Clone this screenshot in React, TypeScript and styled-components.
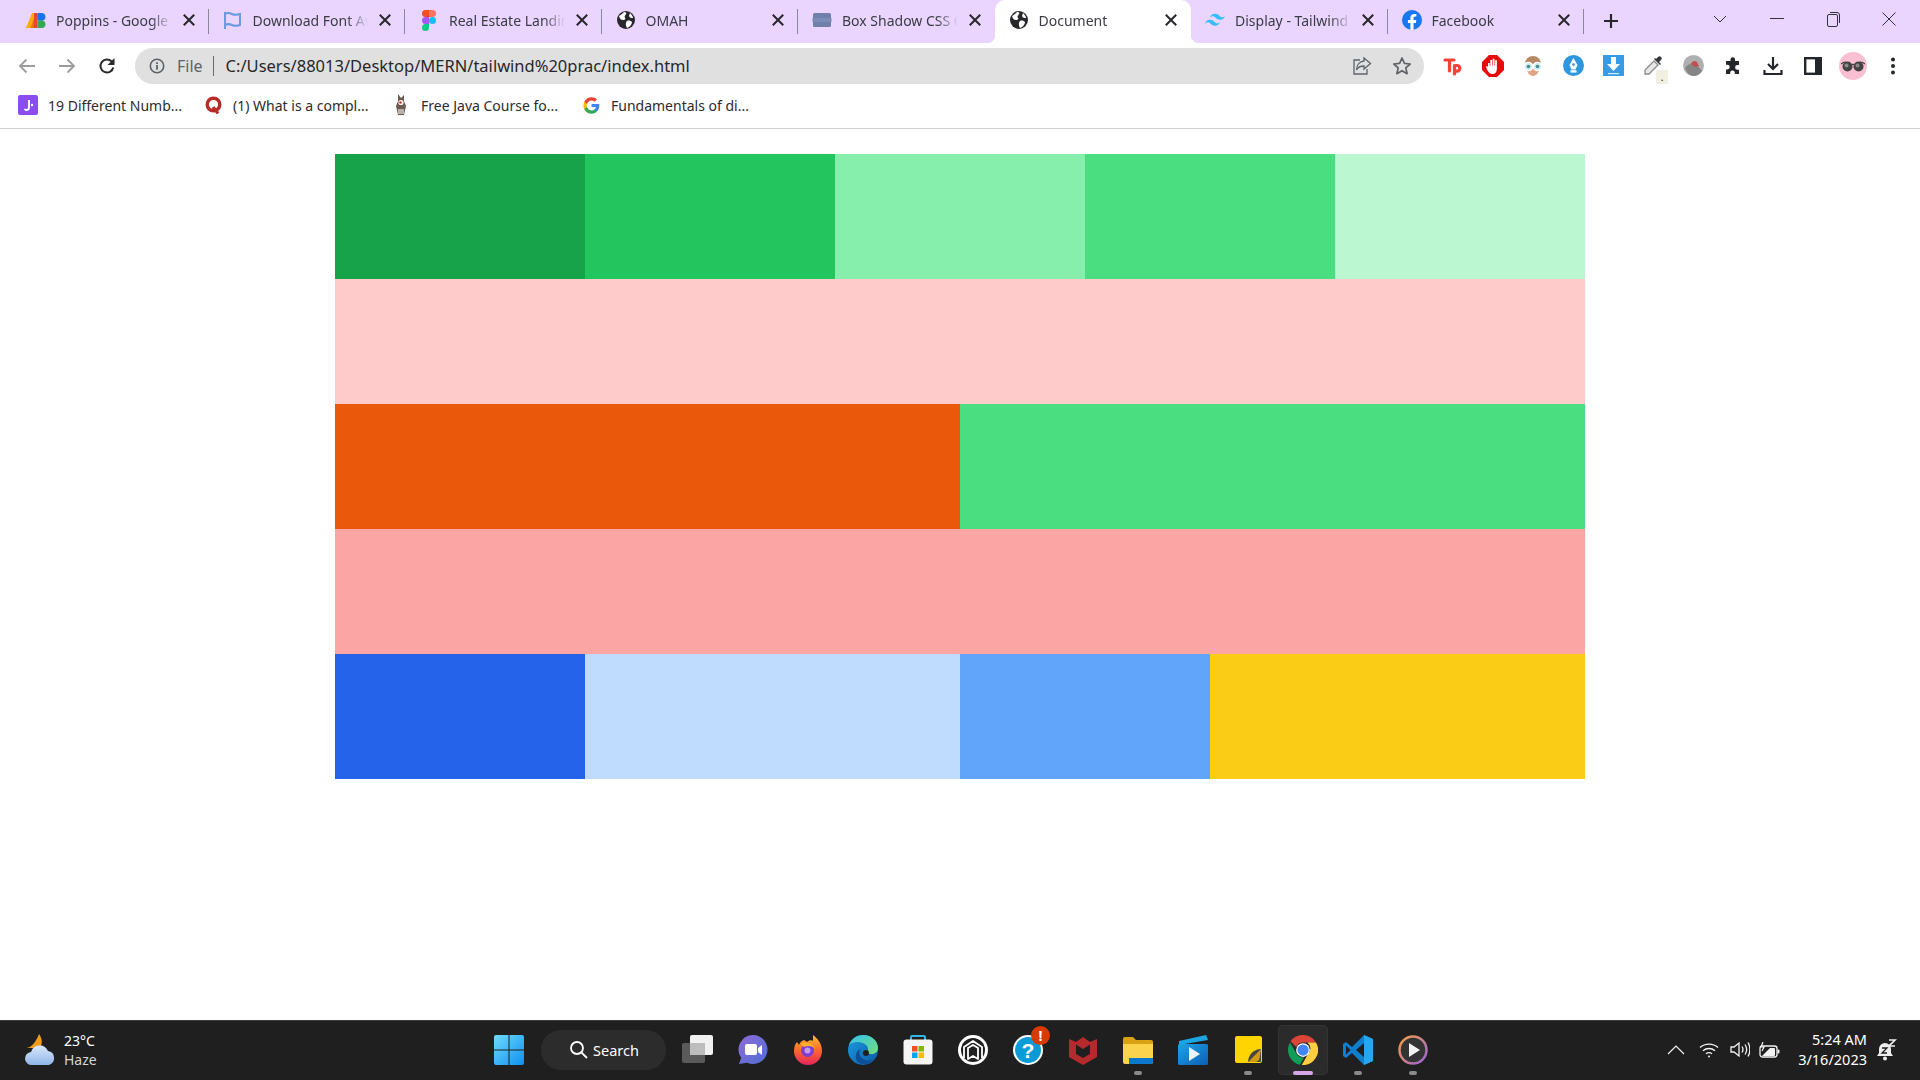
import React from "react";
import styled, { createGlobalStyle, css } from "styled-components";

const Global = createGlobalStyle`
  html, body { margin: 0; padding: 0; background: #fff; }
  * { box-sizing: border-box; }
  body { font-family: "Noto Sans", "Open Sans", sans-serif; }
`;

const Page = styled.div`
  width: 1920px;
  height: 1080px;
  display: flex;
  flex-direction: column;
  overflow: hidden;
`;

/* ---------- tab strip ---------- */
const TabStrip = styled.div`
  height: 43px;
  flex: none;
  background: #e9d5ff;
  display: flex;
  padding-left: 12px;
`;

const Tab = styled.div<{ $active?: boolean; $sep?: boolean }>`
  position: relative;
  width: 196.5px;
  height: 43px;
  flex: none;
  display: flex;
  align-items: center;
  gap: 10px;
  padding: 0 13px 3px 14px;
  color: #3c3c44;
  ${(p) =>
    p.$sep &&
    css`
      &::after {
        content: "";
        position: absolute;
        right: 0;
        top: 9px;
        width: 1px;
        height: 25px;
        background: #8d8896;
      }
    `}
  ${(p) =>
    p.$active &&
    css`
      background: #fff;
      border-radius: 10px 10px 0 0;
      &::before,
      &::after {
        content: "";
        position: absolute;
        bottom: 0;
        width: 8px;
        height: 8px;
      }
      &::before {
        left: -8px;
        background: radial-gradient(circle at 0 0, #e9d5ff 8px, #fff 8.5px);
      }
      &::after {
        right: -8px;
        top: auto;
        background: radial-gradient(circle at 100% 0, #e9d5ff 8px, #fff 8.5px);
      }
    `}
`;

const FavSlot = styled.span`
  width: 20px;
  height: 20px;
  flex: none;
  display: flex;
  align-items: center;
  justify-content: center;
`;

const TabTitle = styled.span`
  flex: 1;
  min-width: 0;
  font-size: 14px;
  white-space: nowrap;
  overflow: hidden;
  -webkit-mask-image: linear-gradient(to right, #000 82%, transparent 100%);
  mask-image: linear-gradient(to right, #000 82%, transparent 100%);
`;

const CloseBox = styled.span`
  width: 14px;
  height: 14px;
  flex: none;
  display: flex;
`;

const NewTab = styled.div`
  width: 54px;
  height: 43px;
  flex: none;
  display: flex;
  align-items: center;
  justify-content: center;
  padding-bottom: 1px;
`;

const StripRight = styled.div`
  margin-left: auto;
  display: flex;
  align-items: flex-start;
`;

const WinBtn = styled.div<{ $w: number }>`
  width: ${(p) => p.$w}px;
  height: 38px;
  display: flex;
  align-items: center;
  justify-content: center;
`;

/* ---------- toolbar ---------- */
const Toolbar = styled.div`
  height: 45px;
  flex: none;
  background: #fff;
  display: flex;
  align-items: center;
  padding-left: 7px;
`;

const NavBtn = styled.div`
  width: 40px;
  height: 36px;
  flex: none;
  display: flex;
  align-items: center;
  justify-content: center;
`;

const Omnibox = styled.div`
  width: 1289px;
  height: 36px;
  margin-left: 8px;
  margin-right: 9px;
  flex: none;
  border-radius: 18px;
  background: #e0e0e0;
  display: flex;
  align-items: center;
  padding: 0 2px 0 14px;
  color: #222;
`;

const FileLabel = styled.span`
  margin-left: 12px;
  font-size: 16px;
  color: #5f6368;
`;

const Divider = styled.span`
  width: 1px;
  height: 20px;
  margin: 0 12px 0 10px;
  background: #6a6a6a;
`;

const Url = styled.span`
  flex: 1;
  font-size: 16.5px;
  color: #27272a;
  white-space: nowrap;
`;

const OmniAction = styled.span`
  width: 40px;
  display: flex;
  justify-content: center;
`;

const ExtSlot = styled.div`
  position: relative;
  width: 40px;
  height: 36px;
  flex: none;
  display: flex;
  align-items: center;
  justify-content: center;
`;

const ExtTag = styled.span`
  position: absolute;
  right: 5px;
  bottom: 0;
  width: 12px;
  height: 14px;
  background: #f1efe2;
  border-radius: 1px;
  display: flex;
  align-items: center;
  justify-content: center;
  color: #222;
  font-size: 10px;
  line-height: 1;
`;

const Avatar = styled.div`
  width: 28px;
  height: 28px;
  border-radius: 50%;
  background: #fbbfd3;
  display: flex;
  align-items: center;
  justify-content: center;
`;

/* ---------- bookmarks ---------- */
const BookmarkBar = styled.div`
  height: 41px;
  flex: none;
  background: #fff;
  border-bottom: 1px solid #d2d2d2;
  display: flex;
  align-items: center;
  padding: 0 0 6px 18px;
`;

const Bookmark = styled.div<{ $w: number; $gap: number }>`
  width: ${(p) => p.$w}px;
  flex: none;
  display: flex;
  align-items: center;
  gap: ${(p) => p.$gap}px;
  font-size: 14px;
  color: #2c2c2c;
  white-space: nowrap;
`;

/* ---------- content ---------- */
const Content = styled.main`
  flex: 1;
  background: #fff;
  padding-top: 25px;
`;

const ColorGrid = styled.div`
  width: 1250px;
  margin: 0 auto;
  display: grid;
  grid-template-columns: repeat(10, 1fr);
  grid-auto-rows: 125px;
`;

const Cell = styled.div<{ $c: string; $span: number }>`
  background: ${(p) => p.$c};
  grid-column: span ${(p) => p.$span};
`;

/* ---------- taskbar ---------- */
const Taskbar = styled.footer`
  height: 60px;
  flex: none;
  background: #1f1f1f;
  border-top: 1px solid #3b3b3b;
  padding-bottom: 2px;
  display: grid;
  grid-template-columns: 484px auto 1fr;
  align-items: center;
  color: #fff;
`;

const Weather = styled.div`
  display: flex;
  align-items: center;
  gap: 8px;
  padding-left: 24px;
`;

const WeatherText = styled.div`
  display: flex;
  flex-direction: column;
  font-size: 14px;
  line-height: 19px;
`;

const WeatherSub = styled.span`
  color: #d4d4d4;
`;

const Dock = styled.div`
  display: flex;
  align-items: center;
  gap: 5px;
`;

const DockItem = styled.div<{ $active?: boolean }>`
  position: relative;
  width: 50px;
  height: 50px;
  flex: none;
  display: flex;
  align-items: center;
  justify-content: center;
  border-radius: 5px;
  ${(p) =>
    p.$active &&
    css`
      background: #2b2b2b;
      box-shadow: inset 0 0 0 1px #343434;
    `}
`;

const Pip = styled.span<{ $active?: boolean }>`
  position: absolute;
  bottom: 0;
  left: 50%;
  transform: translateX(-50%);
  width: ${(p) => (p.$active ? 20 : 8)}px;
  height: 4px;
  border-radius: 2px;
  background: ${(p) => (p.$active ? "#d7a6e8" : "#8a8a8a")};
`;

const Alert = styled.span`
  position: absolute;
  top: 1px;
  right: 3px;
  width: 19px;
  height: 19px;
  border-radius: 50%;
  background: #d83b01;
  color: #fff;
  font-size: 14px;
  font-weight: 700;
  line-height: 19px;
  text-align: center;
`;

const SearchPill = styled.div`
  width: 125px;
  height: 40px;
  margin: 0 2px;
  flex: none;
  border-radius: 20px;
  background: #2c2c2c;
  display: flex;
  align-items: center;
  padding-left: 28px;
  gap: 5px;
  font-size: 14.5px;
`;

const Tray = styled.div`
  justify-self: end;
  display: flex;
  align-items: center;
  height: 100%;
`;

const TrayIcon = styled.div<{ $w: number }>`
  width: ${(p) => p.$w}px;
  display: flex;
  justify-content: center;
`;

const Clock = styled.div`
  margin-left: 14px;
  margin-bottom: 2px;
  text-align: right;
  font-size: 14.5px;
  line-height: 20px;
`;

const BellSlot = styled.div`
  width: 53px;
  padding-left: 8px;
  padding-right: 23px;
  display: flex;
  justify-content: center;
`;

/* ---------- drawings ---------- */
const X = ({ c = "#27272a" }: { c?: string }) => (
  <svg width="14" height="14" viewBox="0 0 14 14">
    <path d="M2.5 2.5l9 9M11.5 2.5l-9 9" stroke={c} strokeWidth="2" strokeLinecap="square" />
  </svg>
);

const Globe = () => (
  <svg width="20" height="20" viewBox="0 0 20 20">
    <circle cx="10" cy="10" r="9" fill="#28282c" />
    <path d="M3 6c2-1 4-3 5-4 2 0 3 1 2 2-1 2-2 2-1 4 1 1 0 2-2 2S4 9 3 6zM11 11c2-1 4 0 5 1 0 2-2 5-5 6-1-2-2-5 0-7zM14 3c1 1 3 3 3 5-2 0-3 0-4-2z" fill="#fff" />
  </svg>
);

const GoogleFontsFav = () => (
  <svg width="20" height="16" viewBox="0 0 20 16">
    <path d="M0 16L6 1h2v15z" fill="#f9ab00" />
    <path d="M4.500 16L9 3.500V16z" fill="#e8710a" />
    <rect x="8" y="1" width="3.500" height="15" fill="#ea4335" />
    <circle cx="15.500" cy="4.800" r="3.900" fill="#1a73e8" />
    <path d="M11.500 1h4v7.600h-4z" fill="#1a73e8" />
    <path d="M11.500 8.500h4.200a3.750 3.750 0 010 7.500h-4.200z" fill="#34a853" />
  </svg>
);

const FlagFav = () => (
  <svg width="19" height="19" viewBox="0 0 19 19" fill="none">
    <path d="M2 1v17" stroke="#6b9be0" strokeWidth="2" />
    <path d="M2 3c2-1.500 4-1.500 7 0s4 1 8 0v11c-3 1-5 1.500-8 0s-5-1-7 0z" stroke="#6b9be0" strokeWidth="2" />
  </svg>
);

const FigmaFav = () => (
  <svg width="14" height="21" viewBox="0 0 14 21">
    <path d="M0 3.500A3.500 3.500 0 013.500 0H7v7H3.500A3.500 3.500 0 010 3.500z" fill="#f24e1e" />
    <path d="M7 0h3.500a3.500 3.500 0 010 7H7z" fill="#ff7262" />
    <path d="M0 10.500A3.500 3.500 0 013.500 7H7v7H3.500A3.500 3.500 0 010 10.500z" fill="#a259ff" />
    <circle cx="10.500" cy="10.500" r="3.500" fill="#1abcfe" />
    <path d="M0 17.500A3.500 3.500 0 013.500 14H7v3.500a3.500 3.500 0 01-7 0z" fill="#0acf83" />
  </svg>
);

const BoxFav = () => (
  <svg width="20" height="16" viewBox="0 0 20 16">
    <rect x="1" y="1" width="18" height="14" rx="1.500" fill="#6f80ab" />
    <rect x="0" y="6" width="20" height="4" fill="#8594bb" opacity=".6" />
  </svg>
);

const TailwindFav = () => (
  <svg width="21" height="14" viewBox="0 0 24 15">
    <path d="M12 0C8.800 0 6.800 1.600 6 4.800c1.200-1.600 2.600-2.200 4.200-1.800.9.200 1.600.9 2.300 1.600C13.700 5.800 15 7.200 18 7.200c3.200 0 5.200-1.600 6-4.800-1.200 1.600-2.600 2.200-4.200 1.800-.9-.2-1.600-.9-2.300-1.600C16.300 1.400 15 0 12 0zM6 7.200c-3.200 0-5.200 1.600-6 4.800 1.200-1.600 2.600-2.200 4.200-1.800.9.200 1.600.9 2.300 1.600 1.200 1.200 2.500 2.600 5.500 2.600 3.200 0 5.200-1.600 6-4.800-1.200 1.600-2.600 2.200-4.200 1.800-.9-.2-1.600-.9-2.300-1.600C10.300 8.600 9 7.200 6 7.200z" fill="#38bdf8" />
  </svg>
);

const FacebookFav = () => (
  <svg width="20" height="20" viewBox="0 0 20 20">
    <circle cx="10" cy="10" r="10" fill="#1877f2" />
    <path d="M13.900 12.900l.4-2.900h-2.800V8.100c0-.8.400-1.600 1.600-1.600h1.300V4.100s-1.100-.2-2.200-.2c-2.300 0-3.800 1.400-3.800 3.900V10H5.900v2.900h2.500V20h3.100v-7.100z" fill="#fff" />
  </svg>
);

const Chevron = () => (
  <svg width="14" height="8" viewBox="0 0 14 8" fill="none">
    <path d="M1 1l6 6 6-6" stroke="#33303a" strokeWidth="1" />
  </svg>
);

const Back = ({ flip }: { flip?: boolean }) => (
  <svg width="18" height="16" viewBox="0 0 18 16" fill="none" style={flip ? { transform: "scaleX(-1)" } : undefined}>
    <path d="M17 8H2M8.500 1.500L2 8l6.500 6.500" stroke="#9c9c9c" strokeWidth="1.800" />
  </svg>
);

const Reload = () => (
  <svg width="18" height="18" viewBox="0 0 18 18" fill="none">
    <path d="M15.300 10.500A6.500 6.500 0 1113.500 4.300L15.500 6.500" stroke="#2b2b2b" strokeWidth="2" />
    <path d="M16.500 1v7h-7z" fill="#2b2b2b" />
  </svg>
);

const Info = () => (
  <svg width="16" height="16" viewBox="0 0 16 16" fill="none">
    <circle cx="8" cy="8" r="6.700" stroke="#5f6368" strokeWidth="1.600" />
    <rect x="7.100" y="7" width="1.800" height="4.700" fill="#5f6368" />
    <rect x="7.100" y="4.200" width="1.800" height="1.800" fill="#5f6368" />
  </svg>
);

const Share = () => (
  <svg width="20" height="20" viewBox="0 0 20 20" fill="none" stroke="#5f6368" strokeWidth="1.300">
    <path d="M8 4H2v14h13v-5" />
    <path d="M12 2l6.500 5.500L12 13V10C8.500 10 6 11 4.500 14c0-5 3-8.500 7.500-9z" />
  </svg>
);

const Star = () => (
  <svg width="20" height="20" viewBox="0 0 20 20" fill="none">
    <path d="M10 2l2.400 5.400 5.800.6-4.400 3.900 1.300 5.800L10 14.700l-5.100 3 1.300-5.800L1.800 8l5.800-.6z" stroke="#5f6368" strokeWidth="1.700" strokeLinejoin="round" />
  </svg>
);

const TpIcon = () => (
  <svg width="20" height="20" viewBox="0 0 20 20" fill="none" stroke="#f44336" strokeWidth="3.200" strokeLinecap="round" strokeLinejoin="round">
    <path d="M2 4h9M6.500 4v11" />
    <path d="M11.500 18V9.500h2.500a2.800 2.800 0 010 5.700h-2" />
  </svg>
);

const StopHand = () => (
  <svg width="22" height="22" viewBox="0 0 22 22">
    <path d="M7 0h8l7 7v8l-7 7H7l-7-7V7z" fill="#e60b0b" />
    <path d="M6 13V8h1.700v3h.6V5h1.800v5.500h.6V3.800h1.800v6.700h.6V5.200h1.800V14c0 3-1.800 5-4.300 5S6 17 5 14.500l-1-3 1.500-.5z" fill="#fff" />
  </svg>
);

const GlassesFace = () => (
  <svg width="22" height="22" viewBox="0 0 22 22">
    <circle cx="11" cy="9" r="8" fill="#b58a63" />
    <path d="M4 11c0 6 4 10 7 10s7-4 7-10z" fill="#e0a482" />
    <circle cx="6.500" cy="11.500" r="4.200" fill="#cfeef2" stroke="#fff" strokeWidth="1.200" />
    <circle cx="15.500" cy="11.500" r="4.200" fill="#cfeef2" stroke="#fff" strokeWidth="1.200" />
    <circle cx="6.500" cy="11.500" r="1.800" fill="#4f8a8f" />
    <circle cx="15.500" cy="11.500" r="1.800" fill="#4f8a8f" />
  </svg>
);

const PenNib = () => (
  <svg width="21" height="21" viewBox="0 0 21 21">
    <circle cx="10.500" cy="10.500" r="10.500" fill="#2f96e0" />
    <path d="M10.500 3l4 7-2 4.500h-4l-2-4.500z" fill="#fff" />
    <circle cx="10.500" cy="9.500" r="1.300" fill="#2f96e0" />
    <rect x="7.500" y="15.200" width="6" height="2.400" fill="#fff" />
  </svg>
);

const BlueDl = () => (
  <svg width="21" height="21" viewBox="0 0 21 21">
    <rect width="21" height="21" fill="#379be5" />
    <path d="M8 2h5v7h4l-6.500 7L4 9h4z" fill="#fff" />
    <rect x="5" y="18" width="11" height="1.200" fill="#cfe8fa" />
  </svg>
);

const Dropper = () => (
  <svg width="20" height="20" viewBox="0 0 20 20">
    <path d="M11 5l4 4-9 9H2v-4z" fill="#e8e8e8" stroke="#8c8c8c" strokeWidth="1.300" />
    <path d="M11 3l6 6 1-1-2-2 2-2a2 2 0 00-3-3l-2 2-1-1z" fill="#33363a" />
  </svg>
);

const GreyBall = () => (
  <svg width="21" height="21" viewBox="0 0 21 21">
    <circle cx="10.500" cy="10.500" r="10.500" fill="#b0b0b0" />
    <path d="M2 13c5-7 11-6 17 3-2 3-5 5-8.500 5C7 21 4 18 2 13z" fill="#858585" />
    <path d="M8 9c1-3 4-4 6-2l2 4-4 1z" fill="#c0504d" />
  </svg>
);

const Puzzle = () => (
  <svg width="18" height="18" viewBox="0 0 18 18">
    <path d="M6.500 2.500a2.300 2.300 0 014.600 0V4H15v4h-1.500a2.400 2.400 0 000 4.800H15V17h-4.200v-1.300a2.300 2.300 0 00-4.600 0V17H2v-4.500h1.300a2.400 2.400 0 000-4.800H2V4h4.500z" fill="#23262b" />
  </svg>
);

const Download = () => (
  <svg width="20" height="20" viewBox="0 0 20 20" fill="none" stroke="#23262b" strokeWidth="2.200">
    <path d="M10 1v11M5 8l5 5 5-5" />
    <path d="M1.500 14v4h17v-4" />
  </svg>
);

const SidePanel = () => (
  <svg width="18" height="18" viewBox="0 0 18 18" fill="none">
    <rect x="1.200" y="1.200" width="15.600" height="15.600" stroke="#23262b" strokeWidth="2.400" />
    <rect x="11" y="1" width="6" height="16" fill="#23262b" />
  </svg>
);

const Shades = () => (
  <svg width="24" height="12" viewBox="0 0 24 12">
    <path d="M0 4c2-2 4-2 5-2M24 4c-2-2-4-2-5-2M10 5c1-1 3-1 4 0" stroke="#333" strokeWidth="1.200" fill="none" />
    <circle cx="6.500" cy="6.500" r="5" fill="#444" />
    <circle cx="17.500" cy="6.500" r="5" fill="#444" />
    <circle cx="5.500" cy="5.500" r="2" fill="#8a8a8a" />
    <circle cx="16.500" cy="5.500" r="2" fill="#8a8a8a" />
  </svg>
);

const Kebab = () => (
  <svg width="4" height="18" viewBox="0 0 4 18" fill="#23262b">
    <circle cx="2" cy="2.500" r="2" />
    <circle cx="2" cy="9" r="2" />
    <circle cx="2" cy="15.500" r="2" />
  </svg>
);

const JBookmark = () => (
  <svg width="20" height="20" viewBox="0 0 20 20">
    <rect width="20" height="20" rx="2" fill="#8b4df0" />
    <path d="M11 5v7.500a2.500 2.500 0 01-4.500 1.500" stroke="#fff" strokeWidth="2" fill="none" />
    <circle cx="14" cy="10" r="1.200" fill="#fff" />
  </svg>
);

const QBookmark = () => (
  <svg width="17" height="18" viewBox="0 0 17 18" fill="none">
    <circle cx="8.500" cy="8.500" r="6.300" stroke="#b92b27" strokeWidth="3.400" />
    <path d="M8 11l5 6.500" stroke="#b92b27" strokeWidth="3" />
  </svg>
);

const JavaBookmark = () => (
  <svg width="16" height="24" viewBox="0 0 16 24">
    <path d="M5 1l3 4 3-3v6l2 5-2 9H5L3 13l2-5z" fill="#6e5a50" />
    <circle cx="8" cy="9.500" r="2.600" fill="#fff" />
    <circle cx="7.500" cy="9.500" r="1.300" fill="#c0392b" />
    <path d="M5 16h6v5H5z" fill="#b8b1ad" />
  </svg>
);

const GoogleG = () => (
  <svg width="17" height="17" viewBox="0 0 48 48">
    <path fill="#4285f4" d="M46 24.500c0-1.600-.1-3.100-.4-4.500H24v8.500h12.300c-.5 2.900-2.100 5.300-4.600 6.900v5.700h7.400C43.400 36.700 46 31.100 46 24.500z" />
    <path fill="#34a853" d="M24 47c6.200 0 11.400-2 15.100-5.500l-7.400-5.700c-2 1.400-4.600 2.200-7.700 2.200-6 0-11-4-12.800-9.500H3.600v5.900C7.300 41.700 15 47 24 47z" />
    <path fill="#fbbc05" d="M11.200 28.500c-.5-1.400-.7-2.900-.7-4.500s.3-3.100.7-4.500v-5.900H3.600C2.100 16.700 1 20.200 1 24s.9 7.300 2.600 10.400z" />
    <path fill="#ea4335" d="M24 10c3.400 0 6.400 1.200 8.800 3.400l6.600-6.600C35.400 3.100 30.200 1 24 1 15 1 7.300 6.300 3.600 13.600l7.600 5.900C13 14 18 10 24 10z" />
  </svg>
);

const WeatherIcon = () => (
  <svg width="32" height="34" viewBox="0 0 32 34">
    <defs>
      <linearGradient id="wc" x1="0" y1="0" x2="0" y2="1">
        <stop offset="0" stopColor="#dbe8fa" />
        <stop offset="1" stopColor="#8fb6e8" />
      </linearGradient>
    </defs>
    <path d="M15 1c3 4 4 9 1 14H2c5 0 10-6 13-14z" fill="#f09a1a" />
    <path d="M8 32a6.500 6.500 0 01-1-13 9 9 0 0117-1 7.200 7.200 0 011 14z" fill="url(#wc)" />
  </svg>
);

const WinLogo = () => (
  <svg width="30" height="30" viewBox="0 0 30 30">
    <defs>
      <linearGradient id="wl" x1="0" y1="0" x2="1" y2="1">
        <stop offset="0" stopColor="#6fdcfb" />
        <stop offset="1" stopColor="#0f8ff0" />
      </linearGradient>
    </defs>
    <path d="M0 2a2 2 0 012-2h12.500v14.500H0zM15.500 0H28a2 2 0 012 2v12.500H15.500zM0 15.500h14.500V30H2a2 2 0 01-2-2zM15.500 15.500H30V28a2 2 0 01-2 2H15.500z" fill="url(#wl)" />
  </svg>
);

const SearchGlass = () => (
  <svg width="19" height="19" viewBox="0 0 19 19" fill="none" stroke="#fff" strokeWidth="1.800">
    <circle cx="8" cy="8" r="6" />
    <path d="M12.500 12.500l5.500 5.500" />
  </svg>
);

const TaskView = () => (
  <svg width="32" height="30" viewBox="0 0 32 30">
    <rect x="0" y="8" width="23" height="20" rx="2" fill="#5a5a5a" />
    <rect x="8" y="0" width="23" height="20" rx="2" fill="#f1f1f1" />
    <rect x="8" y="8" width="15" height="12" fill="#bdbdbd" />
  </svg>
);

const ChatIcon = () => (
  <svg width="30" height="30" viewBox="0 0 30 30">
    <defs>
      <linearGradient id="ch" x1="0" y1="0" x2="1" y2="1">
        <stop offset="0" stopColor="#8f6bd6" />
        <stop offset="1" stopColor="#4f6fd6" />
      </linearGradient>
    </defs>
    <path d="M15 0a14.500 14.500 0 11-6 27.700L1 29l2.200-6.200A14.500 14.500 0 0115 0z" fill="url(#ch)" />
    <rect x="7" y="9" width="12" height="11" rx="2" fill="#fff" />
    <path d="M20 13l4-3v10l-4-3z" fill="#fff" />
  </svg>
);

const Firefox = () => (
  <svg width="30" height="30" viewBox="0 0 30 30">
    <defs>
      <linearGradient id="ff" x1="0" y1="0" x2="0" y2="1">
        <stop offset="0" stopColor="#ffbd2e" />
        <stop offset=".5" stopColor="#ff6a2b" />
        <stop offset="1" stopColor="#e3245d" />
      </linearGradient>
    </defs>
    <path d="M20 0c4 3 9 8 9 16a14 14 0 01-28 0c0-4 1-7 3-9l2 3c1-3 3-4 5-5l3 2c2-2 5-2 6-1z" fill="url(#ff)" />
    <circle cx="14.500" cy="15.500" r="6.500" fill="#7b3fd1" />
    <circle cx="14.500" cy="15.500" r="3" fill="#c79ae8" />
    <path d="M8 9c4-2 11-2 14 4-3-2-8-3-11-1z" fill="#ffb02e" />
  </svg>
);

const Edge = () => (
  <svg width="30" height="30" viewBox="0 0 30 30">
    <defs>
      <linearGradient id="eg" x1="0" y1="0" x2="1" y2="1">
        <stop offset="0" stopColor="#35c1f1" />
        <stop offset="1" stopColor="#6fe07a" />
      </linearGradient>
      <linearGradient id="eb" x1="0" y1="0" x2="1" y2="1">
        <stop offset="0" stopColor="#1b9de2" />
        <stop offset="1" stopColor="#0c59a4" />
      </linearGradient>
    </defs>
    <circle cx="15" cy="15" r="15" fill="url(#eb)" />
    <path d="M1 10C3 4 9 0 15 0c9 0 15 6 15 13 0 4-3 6-7 6-3 0-5-1-5-2 2-1 3-3 1-6-3-4-13-6-18-1z" fill="url(#eg)" />
    <path d="M13 14c-3 3-2 9 4 11 3 1 6 0 8-1-3 4-7 6-11 5 -5-1-7-5-6-9 0-3 2-5 5-6z" fill="#0c4f96" />
    <circle cx="18" cy="18" r="3" fill="#1f1f1f" />
  </svg>
);

const Store = () => (
  <svg width="30" height="30" viewBox="0 0 30 30">
    <path d="M8 5V2a1 1 0 011-1h12a1 1 0 011 1v3" stroke="#2bb5e8" strokeWidth="2" fill="none" />
    <rect x="0.500" y="4.500" width="29" height="25" rx="3" fill="#f5f5f5" />
    <rect x="9" y="11" width="5.500" height="5.500" fill="#f25022" />
    <rect x="15.500" y="11" width="5.500" height="5.500" fill="#7fba00" />
    <rect x="9" y="17.500" width="5.500" height="5.500" fill="#00a4ef" />
    <rect x="15.500" y="17.500" width="5.500" height="5.500" fill="#ffb900" />
  </svg>
);

const ArchIcon = () => (
  <svg width="30" height="30" viewBox="0 0 30 30" fill="none">
    <circle cx="15" cy="15" r="15" fill="#fff" />
    <circle cx="15" cy="15" r="12" fill="#1f1f1f" />
    <path d="M6 23V12l9-6 9 6v11M10 24V13l5-3 5 3v11l-5-3z" stroke="#fff" strokeWidth="1.800" strokeLinejoin="round" />
  </svg>
);

const HelpIcon = () => (
  <svg width="30" height="30" viewBox="0 0 30 30">
    <circle cx="15" cy="15" r="15" fill="#fff" />
    <circle cx="15" cy="15" r="13" fill="#0a9bd6" />
    <text x="15" y="23" fontSize="21" fontWeight="700" fill="#fff" textAnchor="middle" fontFamily="Liberation Sans, sans-serif">?</text>
  </svg>
);

const McAfee = () => (
  <svg width="28" height="31" viewBox="0 0 28 31">
    <path d="M0 5l7 3 7-5 7 5 7-3v18l-14 8-14-8z" fill="#b52a2c" />
    <path d="M7 10.500l7 4.500 7-4.500V20l-7 4-7-4z" fill="#1f1f1f" />
  </svg>
);

const Folder = () => (
  <svg width="30" height="28" viewBox="0 0 30 28">
    <path d="M0 3a2 2 0 012-2h8l3 3h15a2 2 0 012 2v4H0z" fill="#d9a214" />
    <path d="M0 8h30v18a2 2 0 01-2 2H2a2 2 0 01-2-2z" fill="#fcd34d" />
    <path d="M6 22h24v4a2 2 0 01-2 2H6z" fill="#0c77d0" />
  </svg>
);

const VideoEditor = () => (
  <svg width="30" height="30" viewBox="0 0 30 30">
    <defs>
      <linearGradient id="ve" x1="0" y1="0" x2="1" y2="1">
        <stop offset="0" stopColor="#20a3e6" />
        <stop offset="1" stopColor="#0b5fb5" />
      </linearGradient>
    </defs>
    <path d="M1 6l27-6 2 5L1 10z" fill="#19a6e3" />
    <rect x="0" y="9" width="30" height="21" rx="1.500" fill="url(#ve)" />
    <path d="M11 12l11 7-11 7z" fill="#eef3f7" />
  </svg>
);

const Sticky = () => (
  <svg width="27" height="27" viewBox="0 0 27 27">
    <rect width="27" height="27" rx="2" fill="#ffd400" />
    <path d="M26 13v12a1 1 0 01-1 1H13c0-6 5-13 13-13z" fill="#454545" />
    <path d="M13 26l13-13-1 7c0 3-2 6-5 6z" fill="#d09a10" />
  </svg>
);

const Chrome = () => (
  <svg width="30" height="30" viewBox="0 0 48 48">
    <path d="M24 0a24 24 0 0120.800 12H24a12 12 0 00-11 7L4 10A24 24 0 0124 0z" fill="#db4437" />
    <path d="M3.200 12l10.400 18a12 12 0 0012 6L19 47.500A24 24 0 013.200 12z" fill="#0f9d58" />
    <path d="M44.800 12A24 24 0 0122 48l10.400-18a12 12 0 00-1.500-18z" fill="#ffcd40" />
    <circle cx="24" cy="24" r="11" fill="#fff" />
    <circle cx="24" cy="24" r="9" fill="#4285f4" />
  </svg>
);

const VSCode = () => (
  <svg width="30" height="30" viewBox="0 0 30 30">
    <path d="M21 0l9 4v22l-9 4-12-12-6 5-3-2v-12l3-2 6 5z" fill="#0f7fcc" />
    <path d="M21 0l9 4v22l-9 4z" fill="#26a6ee" />
    <path d="M21 8v14l-8-7zM3 10.500V19.500l4.500-4.500z" fill="#1f1f1f" />
  </svg>
);

const PlayRing = () => (
  <svg width="30" height="30" viewBox="0 0 30 30">
    <defs>
      <linearGradient id="pr" x1="0" y1="0" x2="1" y2="1">
        <stop offset="0" stopColor="#f59e42" />
        <stop offset="1" stopColor="#9a63d8" />
      </linearGradient>
    </defs>
    <circle cx="15" cy="15" r="13.500" fill="#333" stroke="url(#pr)" strokeWidth="2.500" />
    <path d="M11 8l11 7-11 7z" fill="#f2f2f2" />
  </svg>
);

const Bell = () => (
  <svg width="22" height="22" viewBox="0 0 22 22">
    <path d="M10 4a6 6 0 00-6 6v4l-2 3h16l-2-3v-4a6 6 0 00-6-6z" fill="#eee" />
    <circle cx="10" cy="19.500" r="2" fill="#eee" />
    <path d="M7 9h5l-5 5h5" stroke="#1f1f1f" strokeWidth="1.300" fill="none" />
    <path d="M14 1h6l-6 6h6" stroke="#eee" strokeWidth="1.700" fill="none" />
  </svg>
);

const TrayUp = () => (
  <svg width="18" height="10" viewBox="0 0 18 10" fill="none">
    <path d="M1 9l8-8 8 8" stroke="#f2f2f2" strokeWidth="1.200" />
  </svg>
);

const Wifi = () => (
  <svg width="20" height="16" viewBox="0 0 20 16" fill="none" stroke="#f2f2f2" strokeWidth="1.400">
    <path d="M1 5.500c5-4.500 13-4.500 18 0M4 8.800c3.500-3 8.500-3 12 0M7 11.800c1.800-1.400 4.200-1.400 6 0" />
    <circle cx="10" cy="14.500" r="1" fill="#f2f2f2" stroke="none" />
  </svg>
);

const Volume = () => (
  <svg width="20" height="17" viewBox="0 0 20 17" fill="none" stroke="#f2f2f2" strokeWidth="1.300">
    <path d="M1 6v5h3l5 4V2L4 6z" />
    <path d="M12 5.500c1.200 1.800 1.200 4.200 0 6M15 3.500c2 3 2 7 0 10M18 1.500c2.500 4 2.500 10 0 14" />
  </svg>
);

const Battery = () => (
  <svg width="21" height="16" viewBox="0 0 21 16" fill="none">
    <rect x="1" y="4" width="17" height="11" rx="2.500" stroke="#f2f2f2" strokeWidth="1.300" />
    <rect x="18.500" y="7.500" width="2" height="4" rx="1" fill="#f2f2f2" />
    <path d="M3 14l8-8h4a1 1 0 011 1v6a1 1 0 01-1 1z" fill="#f2f2f2" />
    <path d="M4 0l-2 5h3l-2 4" stroke="#f2f2f2" strokeWidth="1.200" />
  </svg>
);

/* ---------- data ---------- */
const tabs: { title: string; icon: React.ReactNode; active?: boolean; sep?: boolean }[] = [
  { title: "Poppins - Google Fonts", icon: <GoogleFontsFav />, sep: true },
  { title: "Download Font Awesome", icon: <FlagFav />, sep: true },
  { title: "Real Estate Landing Page", icon: <FigmaFav />, sep: true },
  { title: "OMAH", icon: <Globe />, sep: true },
  { title: "Box Shadow CSS Generator", icon: <BoxFav /> },
  { title: "Document", icon: <Globe />, active: true },
  { title: "Display - Tailwind CSS", icon: <TailwindFav />, sep: true },
  { title: "Facebook", icon: <FacebookFav />, sep: true },
];

const rows: [string, number][] = [
  ["#16a34a", 2],
  ["#22c55e", 2],
  ["#86efac", 2],
  ["#4ade80", 2],
  ["#bbf7d0", 2],
  ["#fecaca", 10],
  ["#ea580c", 5],
  ["#4ade80", 5],
  ["#fca5a5", 10],
  ["#2563eb", 2],
  ["#bfdbfe", 3],
  ["#60a5fa", 2],
  ["#facc15", 3],
];

export default function App() {
  return (
    <Page>
      <Global />
      <TabStrip>
        {tabs.map((t) => (
          <Tab key={t.title} $active={t.active} $sep={t.sep}>
            <FavSlot>{t.icon}</FavSlot>
            <TabTitle>{t.title}</TabTitle>
            <CloseBox>
              <X />
            </CloseBox>
          </Tab>
        ))}
        <NewTab>
          <svg width="16" height="16" viewBox="0 0 16 16">
            <path d="M8 1v14M1 8h14" stroke="#26262c" strokeWidth="2.200" />
          </svg>
        </NewTab>
        <StripRight>
          <WinBtn $w={48}>
            <Chevron />
          </WinBtn>
          <WinBtn $w={65}>
            <svg width="14" height="2" viewBox="0 0 14 2">
              <rect width="14" height="1" fill="#33303a" />
            </svg>
          </WinBtn>
          <WinBtn $w={48}>
            <svg width="13" height="15" viewBox="0 0 13 15" fill="none" stroke="#33303a">
              <rect x="0.500" y="2.500" width="10" height="12" rx="1.500" />
              <path d="M3 .5h7a2.500 2.500 0 012.500 2.500v8" />
            </svg>
          </WinBtn>
          <WinBtn $w={63}>
            <svg width="14" height="14" viewBox="0 0 14 14" stroke="#33303a">
              <path d="M.5.500l13 13M13.500.500l-13 13" />
            </svg>
          </WinBtn>
        </StripRight>
      </TabStrip>

      <Toolbar>
        <NavBtn>
          <Back />
        </NavBtn>
        <NavBtn>
          <Back flip />
        </NavBtn>
        <NavBtn>
          <Reload />
        </NavBtn>
        <Omnibox>
          <Info />
          <FileLabel>File</FileLabel>
          <Divider />
          <Url>C:/Users/88013/Desktop/MERN/tailwind%20prac/index.html</Url>
          <OmniAction>
            <Share />
          </OmniAction>
          <OmniAction>
            <Star />
          </OmniAction>
        </Omnibox>
        <ExtSlot>
          <TpIcon />
        </ExtSlot>
        <ExtSlot>
          <StopHand />
        </ExtSlot>
        <ExtSlot>
          <GlassesFace />
        </ExtSlot>
        <ExtSlot>
          <PenNib />
        </ExtSlot>
        <ExtSlot>
          <BlueDl />
        </ExtSlot>
        <ExtSlot>
          <Dropper />
          <ExtTag>.</ExtTag>
        </ExtSlot>
        <ExtSlot>
          <GreyBall />
        </ExtSlot>
        <ExtSlot>
          <Puzzle />
        </ExtSlot>
        <ExtSlot>
          <Download />
        </ExtSlot>
        <ExtSlot>
          <SidePanel />
        </ExtSlot>
        <ExtSlot>
          <Avatar>
            <Shades />
          </Avatar>
        </ExtSlot>
        <ExtSlot>
          <Kebab />
        </ExtSlot>
      </Toolbar>

      <BookmarkBar>
        <Bookmark $w={187} $gap={10}>
          <JBookmark />
          19 Different Numb...
        </Bookmark>
        <Bookmark $w={188} $gap={11}>
          <QBookmark />
          (1) What is a compl...
        </Bookmark>
        <Bookmark $w={190} $gap={12}>
          <JavaBookmark />
          Free Java Course fo...
        </Bookmark>
        <Bookmark $w={200} $gap={11}>
          <GoogleG />
          Fundamentals of di...
        </Bookmark>
      </BookmarkBar>

      <Content>
        <ColorGrid>
          {rows.map(([c, s], i) => (
            <Cell key={i} $c={c} $span={s} />
          ))}
        </ColorGrid>
      </Content>

      <Taskbar>
        <Weather>
          <WeatherIcon />
          <WeatherText>
            <span>23°C</span>
            <WeatherSub>Haze</WeatherSub>
          </WeatherText>
        </Weather>
        <Dock>
          <DockItem>
            <WinLogo />
          </DockItem>
          <SearchPill>
            <SearchGlass />
            Search
          </SearchPill>
          <DockItem>
            <TaskView />
          </DockItem>
          <DockItem>
            <ChatIcon />
          </DockItem>
          <DockItem>
            <Firefox />
          </DockItem>
          <DockItem>
            <Edge />
          </DockItem>
          <DockItem>
            <Store />
          </DockItem>
          <DockItem>
            <ArchIcon />
          </DockItem>
          <DockItem>
            <HelpIcon />
            <Alert>!</Alert>
          </DockItem>
          <DockItem>
            <McAfee />
          </DockItem>
          <DockItem>
            <Folder />
            <Pip />
          </DockItem>
          <DockItem>
            <VideoEditor />
          </DockItem>
          <DockItem>
            <Sticky />
            <Pip />
          </DockItem>
          <DockItem $active>
            <Chrome />
            <Pip $active />
          </DockItem>
          <DockItem>
            <VSCode />
            <Pip />
          </DockItem>
          <DockItem>
            <PlayRing />
            <Pip />
          </DockItem>
        </Dock>
        <Tray>
          <TrayIcon $w={34}>
            <TrayUp />
          </TrayIcon>
          <TrayIcon $w={32}>
            <Wifi />
          </TrayIcon>
          <TrayIcon $w={30}>
            <Volume />
          </TrayIcon>
          <TrayIcon $w={29}>
            <Battery />
          </TrayIcon>
          <Clock>
            5:24 AM
            <br />
            3/16/2023
          </Clock>
          <BellSlot>
            <Bell />
          </BellSlot>
        </Tray>
      </Taskbar>
    </Page>
  );
}
